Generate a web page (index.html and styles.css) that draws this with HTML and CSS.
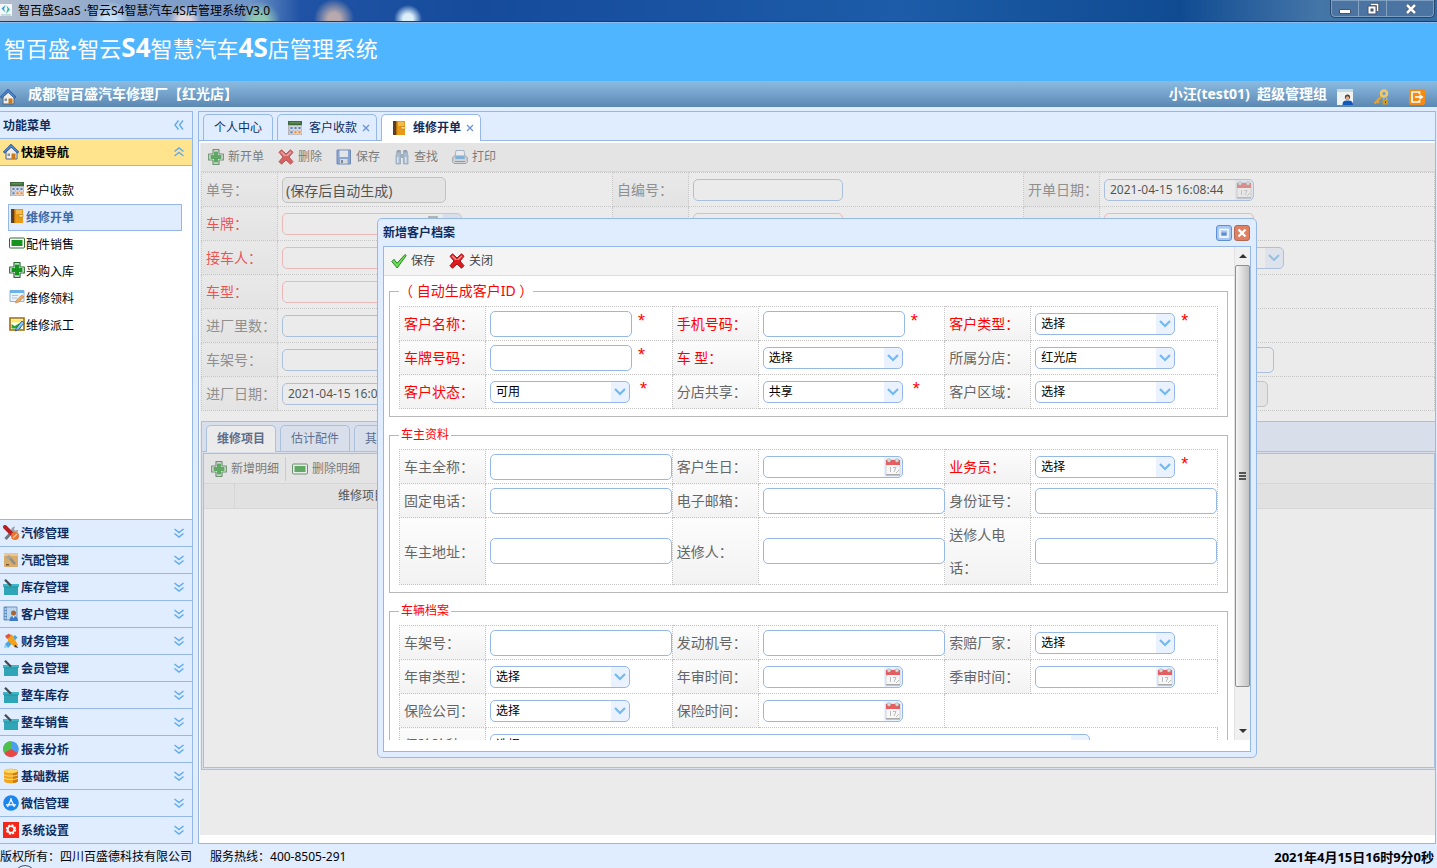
FILE: index.html
```html
<!DOCTYPE html>
<html lang="zh-CN">
<head>
<meta charset="utf-8">
<title>智百盛SaaS ·智云S4智慧汽车4S店管理系统V3.0</title>
<link rel="stylesheet" href="styles.css">
</head>
<body>
<svg class="sprite" aria-hidden="true">
  <symbol id="home" viewBox="0 0 16 16"><path d="M3 8v7h11V8L8.500 3z" fill="#f4efe2" stroke="#56627a"/><path d="M.8 8.800 8 1.500l7.400 7.300" fill="none" stroke="#2b5fa8" stroke-width="2.600"/><path d="M1.500 8 8 1.700 14.600 8" fill="none" stroke="#6ba6e8"/><path d="M8.500 9.500h4V15h-4z" fill="#c97a1e"/><path d="M4.500 9.500h2.500v2.500H4.500z" fill="#7d91ae"/></symbol>
  <symbol id="calc" viewBox="0 0 16 16"><path d="M1 1h14v14H1z" fill="#b5b5b5"/><path d="M1 1h14v4H1z" fill="#3f6b3c"/><path d="M2.500 2h11v1.500h-11z" fill="#5f8d58"/><path d="M3 6.500h3v3H3zM7 6.500h3v3H7zM3 10.800h3v3H3z" fill="#5f83b8" stroke="#fff" stroke-width=".6"/><path d="M11 6.500h3v3h-3z" fill="#5f83b8" stroke="#fff" stroke-width=".6"/><path d="M7 10.800h3v3H7zM11 10.800h3v3h-3z" fill="#e58a3c" stroke="#fff" stroke-width=".6"/></symbol>
  <symbol id="book" viewBox="0 0 16 16"><path d="M2 1h12v14H2z" fill="#e79a16"/><path d="M2 1h3v14H2z" fill="#5a4026"/><path d="M5 1h1.200v14H5z" fill="#b8720d"/><path d="M7 2h6v4H7z" fill="#f4bb4b"/><path d="M10 6.500h4v2.500h-4z" fill="#ffe089" stroke="#a86b10" stroke-width=".5"/></symbol>
  <symbol id="minus" viewBox="0 0 16 16"><rect x=".5" y="3" width="15" height="10" rx="1" fill="#fff" stroke="#2d6b35"/><path d="M2.500 5h11v6h-11z" fill="#16921e"/></symbol>
  <symbol id="plus" viewBox="0 0 16 16"><path d="M5 .7h6V5h4.300v6H11v4.300H5V11H.7V5H5z" fill="#fff" stroke="#2d6b35" stroke-width="1.200" stroke-linejoin="round"/><path d="M6 2.500h4V6h3.500v4H10v3.500H6V10H2.500V6H6z" fill="#16921e"/></symbol>
  <symbol id="formedit" viewBox="0 0 16 16"><path d="M1 1.500h14v11H1z" fill="#eaf3fb" stroke="#8fb3d3"/><path d="M1 1h14v3H1z" fill="#6fb2e8"/><path d="M3 6.500h6M3 9h5" stroke="#a9c4dc"/><path d="m6.500 14 1-3 5.500-5 2 2-5.500 5.200z" fill="#eda963" stroke="#b88450" stroke-width=".6"/></symbol>
  <symbol id="picedit" viewBox="0 0 16 16"><path d="M1 2h14v12H1z" fill="#fff" stroke="#a56a00" stroke-width="1.600"/><path d="M2.500 3.500h11v3h-11z" fill="#ffe86a"/><path d="M2.500 8l3 2L12 6.500V12.500H2.500z" fill="#2da52d"/><path d="m6.500 15 .8-3L13 5l2.300 2-5.800 6.600z" fill="#8cc8f5" stroke="#14499a" stroke-width=".8"/></symbol>
  <symbol id="tools" viewBox="0 0 16 16"><path d="m2.500 14 6.500-7" stroke="#6e767c" stroke-width="3"/><path d="M9 8a4 4 0 0 1 1-6l2-.6-1 3 1.300 1.300 2.900-.9c0 3-3 5-6.200 3.200" fill="#9aa1a6"/><path d="m2 2 6.500 6.500" stroke="#b51f24" stroke-width="4" stroke-linecap="round"/><circle cx="12" cy="11" r="4" fill="#e8742c"/><path d="m10 13 4-4" stroke="#f7c79f" stroke-width="1.200"/></symbol>
  <symbol id="parts" viewBox="0 0 16 16"><rect x="1" y="1" width="14" height="14" rx="1" fill="#d7ab6a"/><path d="M1 1h14v3H1z" fill="#e8c890"/><path d="m5 4 7 8" stroke="#8c8b86" stroke-width="2.500"/><path d="M3 4.500 6 3l2 3-2 2-2-1z" fill="#a9a49b"/><path d="M3 12h3v1.500H3z" fill="#7b5934"/></symbol>
  <symbol id="basket" viewBox="0 0 16 16"><path d="M0 5h16v3H0z" fill="#3fb7c8"/><path d="M1 7.500h14V16H1z" fill="#2fa5b7"/><path d="m2 .8 6 6" stroke="#414b50" stroke-width="2.300"/><path d="M1 8h14" stroke="#1f8494" stroke-width=".6"/></symbol>
  <symbol id="client" viewBox="0 0 16 16"><path d="M1 1h13v13H1z" fill="#bcd6ef" stroke="#6f94bd"/><path d="M1 1h3v13H1z" fill="#5c8fc4"/><path d="M1.500 3h2M1.500 6h2M1.500 9h2M1.500 12h2" stroke="#fff"/><circle cx="10.500" cy="7" r="2.500" fill="#a8652f"/><path d="M6.500 15c0-4 2-5 4-5s4.500 1 4.500 5z" fill="#3b7bc9"/><path d="m9.500 10 1 2.500 1-2.500z" fill="#fff"/></symbol>
  <symbol id="brush" viewBox="0 0 16 16"><path d="m2 11 10-9 2.500 2.500L5 15z" fill="#48a6e0"/><path d="m4 2 5-.5L15 12l-3 2.500L5 8z" fill="#f2a21d"/><path d="m2 3 4-2.500L8 3 4 6z" fill="#e55246"/><path d="m12 11.500 3.500 3.500-4-1z" fill="#333"/><path d="m2 11 3 3-4 1z" fill="#8bcaf0"/></symbol>
  <symbol id="pie" viewBox="0 0 16 16"><circle cx="8" cy="8" r="7.800" fill="#4b9ded"/><path d="M8 8V.2A7.800 7.800 0 0 0 1.200 12z" fill="#4cc047"/><path d="M8 8 1.200 12A7.800 7.800 0 0 0 14.800 12z" fill="#e94742"/></symbol>
  <symbol id="db" viewBox="0 0 16 16"><path d="M1 3c0-3 14-3 14 0v10c0 3-14 3-14 0z" fill="#f0a51c"/><path d="M10 1.200c3 .2 5 1 5 1.800v10c0 1-2 1.800-5 2z" fill="#cf7c0d"/><ellipse cx="8" cy="3" rx="7" ry="2" fill="#ffd765"/><path d="M1 6.500c1 2 13 2 14 0M1 10c1 2 13 2 14 0" fill="none" stroke="#ffe08a"/></symbol>
  <symbol id="app" viewBox="0 0 16 16"><circle cx="8" cy="8" r="7.800" fill="#1b86ee"/><path d="m4.500 12 4-8.500M7.500 3.500l4 8.500M3 9.800h10" fill="none" stroke="#fff" stroke-width="1.300"/></symbol>
  <symbol id="gear" viewBox="0 0 16 16"><path d="M0 0h16v16H0z" fill="#f52718"/><circle cx="8" cy="7.500" r="4.300" fill="none" stroke="#fff" stroke-width="1.800" stroke-dasharray="2 1.370"/><circle cx="8" cy="7.500" r="3.200" fill="none" stroke="#fff" stroke-width="1.600"/></symbol>
  <symbol id="cross" viewBox="0 0 16 16"><path d="M1 3.300 3.500.8 8 5 12.500.8 15 3.300 11 8l4 4.700-2.500 2.500L8 11l-4.500 4.200L1 12.700 5 8z" fill="#dc1c1c" stroke="#a80f16"/><path d="M2.500 3.300 3.500 2.300 8 6.500l4.500-4.200 1 1L10 7H6z" fill="#f58a8a"/></symbol>
  <symbol id="check" viewBox="0 0 16 16"><path d="M.8 8.500 3 6.300l3 4L14 1.500l1.200 1-9 12.500z" fill="#6fdc55" stroke="#238a1e" stroke-linejoin="round"/></symbol>
  <symbol id="disk" viewBox="0 0 16 16"><path d="M1 1h13.500v14H1z" fill="#5a8ad6" stroke="#365fa6"/><path d="M3.500 1.500h8.500v6.500h-8.500z" fill="#eef4fc"/><path d="M4 10h7.500v4.500H4z" fill="#dfe6ee"/><path d="M5 11h2v3H5z" fill="#4a5d7c"/></symbol>
  <symbol id="find" viewBox="0 0 16 16"><path d="M3 2h3.500v13H2V7zM9.500 2H13l1 5v8H9.500z" fill="#8fb0d0" stroke="#7590ab" stroke-width=".8"/><path d="M6.500 5h3v4h-3z" fill="#7e9cb8"/><path d="M3 8h1.500v6H3zM11 8h1.500v6H11z" fill="#e8f2fb"/><path d="M3 1h3.500v2.500H3zM9.500 1H13v2.500H9.500z" fill="#73869a"/></symbol>
  <symbol id="print" viewBox="0 0 16 16"><path d="M4 1.500h8l1 6H3z" fill="#fff" stroke="#8aa4c0"/><path d="M.7 8.500 3 7h10l2.300 1.500V13L14 14.500H2L.7 13z" fill="#d2d6dc" stroke="#7c858f"/><path d="M4 7h8l1 3H3z" fill="#4f9de0"/><path d="M3 12.500h10" stroke="#777"/></symbol>
  <symbol id="usercard" viewBox="0 0 16 16"><path d="M0 0h16v16H0z" fill="#eef3f3"/><path d="M0 0h16v3H0z" fill="#cad9dc"/><circle cx="10.500" cy="8" r="2.600" fill="#5a3c2a"/><circle cx="10.500" cy="9" r="1.800" fill="#e5b089"/><path d="M5.500 16c0-4 2-4.500 5-4.500s5.500.5 5.500 4.500z" fill="#1559b8"/></symbol>
  <symbol id="key" viewBox="0 0 16 16"><path d="m9 7-7.500 7.500M4 12l2 2" stroke="#e0a43d" stroke-width="2.400"/><circle cx="11" cy="4.500" r="3" fill="none" stroke="#f4c866" stroke-width="2.600"/><path d="M9.500 11h5.500v4.500H9.500z" fill="#d39a1e"/><path d="M10.800 11V9.500c0-2 3-2 3 0V11" fill="none" stroke="#b9bec4"/><path d="M12 12.500h1v1.500h-1z" fill="#63430b"/></symbol>
  <symbol id="exit" viewBox="0 0 16 16"><rect width="16" height="16" rx="2" fill="#f58b12"/><path d="M10.500 5V3H3v10h7.500v-2" fill="none" stroke="#fff" stroke-width="1.700"/><path d="M6 8h6" stroke="#fff" stroke-width="1.700"/><path d="m10.500 5 4 3-4 3z" fill="#fff"/></symbol>
  <symbol id="down2" viewBox="0 0 10 10"><path d="m.5 1 4.500 3.500L9.500 1M.5 5.500 5 9l4.500-3.500" fill="none" stroke="#5fabec" stroke-width="1.400"/></symbol>
  <symbol id="up2" viewBox="0 0 10 10"><path d="M.5 4.500 5 1l4.500 3.500M.5 9 5 5.500 9.500 9" fill="none" stroke="#5fabec" stroke-width="1.400"/></symbol>
  <symbol id="left2" viewBox="0 0 10 10"><path d="M4.500.5 1 5l3.500 4.500M9 .5 5.500 5 9 9.500" fill="none" stroke="#5fabec" stroke-width="1.400"/></symbol>
  <symbol id="tabx" viewBox="0 0 8 8"><path d="m1 1 6 6M7 1 1 7" stroke="#6b93cb" stroke-width="1.300"/></symbol>
  <symbol id="winmax" viewBox="0 0 16 16"><rect x=".5" y=".5" width="15" height="15" rx="2.500" fill="#a9c9f3" stroke="#5f8fd0"/><path d="M4 4.500h8v7.500H4z" fill="#a9c9f3" stroke="#fff" stroke-width="1.400"/><path d="M5.500 7.500h5v3h-5z" fill="#5f8fd0"/></symbol>
  <symbol id="winclose" viewBox="0 0 16 16"><rect x=".5" y=".5" width="15" height="15" rx="2.500" fill="#e07f62" stroke="#ae6a55"/><path d="m4.500 4.500 7 7M11.500 4.500l-7 7" stroke="#fff" stroke-width="2.400"/></symbol>
  <symbol id="logo" viewBox="0 0 12 12"><path d="M0 0h12v12H0z" fill="#f4f8f8"/><path d="M5.500 1 1.500 4.500l4 4L4 5z" fill="#2f9ed0"/><path d="m6.500 1.500 3.500 4L6 10l1.500-5z" fill="#45b7a0"/><path d="M1 11h10" stroke="#9bb"/></symbol>
  <symbol id="wmin" viewBox="0 0 14 14"><path d="M1.500 7.500h11v4h-11z" fill="#fff" stroke="#47536b"/></symbol>
  <symbol id="wrestore" viewBox="0 0 14 14"><path d="M5 2.500h6.500V9" fill="none" stroke="#47536b" stroke-width="3.500"/><path d="M5 2.500h6.500V9" fill="none" stroke="#fff" stroke-width="1.600"/><path d="M3.500 5.500h5v5h-5z" fill="none" stroke="#47536b" stroke-width="4"/><path d="M3.500 5.500h5v5h-5z" fill="none" stroke="#fff" stroke-width="2"/></symbol>
  <symbol id="wclose" viewBox="0 0 14 14"><path d="m3 3 8 8M11 3l-8 8" stroke="#47536b" stroke-width="4.200"/><path d="m3 3 8 8M11 3l-8 8" stroke="#fff" stroke-width="2.500"/></symbol>
</svg>

<div class="titlebar">
  <svg class="logo"><use href="#logo"/></svg>
  <span class="apptitle">智百盛SaaS ·智云S4智慧汽车4S店管理系统V3.0</span>
  <div class="winbtns">
    <button aria-label="最小化"><svg><use href="#wmin"/></svg></button>
    <button aria-label="还原"><svg><use href="#wrestore"/></svg></button>
    <button class="wide" aria-label="关闭窗口"><svg><use href="#wclose"/></svg></button>
  </div>
</div>

<header class="banner"><h1>智百盛<b>·</b>智云<b>S4</b>智慧汽车<b>4S</b>店管理系统</h1></header>
<div class="shopbar">
  <svg class="ic"><use href="#home"/></svg>
  <span class="shop">成都智百盛汽车修理厂【红光店】</span>
  <span class="who">小汪(test01)&nbsp; 超级管理组</span>
  <a href="#" aria-label="个人资料"><svg class="ic"><use href="#usercard"/></svg></a>
  <a href="#" aria-label="修改密码"><svg class="ic"><use href="#key"/></svg></a>
  <a href="#" aria-label="退出"><svg class="ic"><use href="#exit"/></svg></a>
</div>

<div class="work">
  <nav class="west">
    <div class="acc top">功能菜单<svg class="chev"><use href="#left2"/></svg></div>
    <button class="acc open"><svg class="ic"><use href="#home"/></svg>快捷导航<svg class="chev"><use href="#up2"/></svg></button>
    <div class="tree">
      <a href="#"><svg class="ic"><use href="#calc"/></svg>客户收款</a>
      <a href="#" class="sel"><svg class="ic"><use href="#book"/></svg>维修开单</a>
      <a href="#"><svg class="ic"><use href="#minus"/></svg>配件销售</a>
      <a href="#"><svg class="ic"><use href="#plus"/></svg>采购入库</a>
      <a href="#"><svg class="ic"><use href="#formedit"/></svg>维修领料</a>
      <a href="#"><svg class="ic"><use href="#picedit"/></svg>维修派工</a>
    </div>
    <button class="acc"><svg class="ic"><use href="#tools"/></svg>汽修管理<svg class="chev"><use href="#down2"/></svg></button>
    <button class="acc"><svg class="ic"><use href="#parts"/></svg>汽配管理<svg class="chev"><use href="#down2"/></svg></button>
    <button class="acc"><svg class="ic"><use href="#basket"/></svg>库存管理<svg class="chev"><use href="#down2"/></svg></button>
    <button class="acc"><svg class="ic"><use href="#client"/></svg>客户管理<svg class="chev"><use href="#down2"/></svg></button>
    <button class="acc"><svg class="ic"><use href="#brush"/></svg>财务管理<svg class="chev"><use href="#down2"/></svg></button>
    <button class="acc"><svg class="ic"><use href="#basket"/></svg>会员管理<svg class="chev"><use href="#down2"/></svg></button>
    <button class="acc"><svg class="ic"><use href="#basket"/></svg>整车库存<svg class="chev"><use href="#down2"/></svg></button>
    <button class="acc"><svg class="ic"><use href="#basket"/></svg>整车销售<svg class="chev"><use href="#down2"/></svg></button>
    <button class="acc"><svg class="ic"><use href="#pie"/></svg>报表分析<svg class="chev"><use href="#down2"/></svg></button>
    <button class="acc"><svg class="ic"><use href="#db"/></svg>基础数据<svg class="chev"><use href="#down2"/></svg></button>
    <button class="acc"><svg class="ic"><use href="#app"/></svg>微信管理<svg class="chev"><use href="#down2"/></svg></button>
    <button class="acc"><svg class="ic"><use href="#gear"/></svg>系统设置<svg class="chev"><use href="#down2"/></svg></button>
  </nav>

  <main class="center">
    <div class="tabs">
      <button class="tab">个人中心</button>
      <button class="tab icon"><svg class="ic"><use href="#calc"/></svg>客户收款<svg class="tabx"><use href="#tabx"/></svg></button>
      <button class="tab icon on"><svg class="ic"><use href="#book"/></svg>维修开单<svg class="tabx"><use href="#tabx"/></svg></button>
    </div>
    <div class="page">
      <div class="toolbar">
        <button><svg class="ic"><use href="#plus"/></svg>新开单</button>
        <button><svg class="ic"><use href="#cross"/></svg>删除</button>
        <button><svg class="ic"><use href="#disk"/></svg>保存</button>
        <button><svg class="ic"><use href="#find"/></svg>查找</button>
        <button><svg class="ic"><use href="#print"/></svg>打印</button>
      </div>
      <table class="form order">
        <colgroup><col class="lab"><col><col class="lab"><col><col class="lab"><col></colgroup>
        <tr><th><label for="o1">单号：</label></th><td><input id="o1" class="tall ro" value="(保存后自动生成)" readonly></td><th><label for="o2">自编号：</label></th><td><input id="o2" class="w150"></td><th><label for="o3">开单日期：</label></th><td><input id="o3" class="w150 date" value="2021-04-15 16:08:44"></td></tr>
        <tr><th class="req"><label for="o4">车牌：</label></th><td><input id="o4" class="w180 bad lookup"></td><th></th><td><input class="w150 bad" aria-label="联系人"></td><th></th><td><input class="w150 bad" aria-label="联系电话"></td></tr>
        <tr><th class="req"><label for="o5">接车人：</label></th><td><input id="o5" class="w180 bad"></td><th></th><td></td><th></th><td><select class="w180" aria-label="维修类型"><option></option></select></td></tr>
        <tr><th class="req"><label for="o6">车型：</label></th><td><input id="o6" class="w180 bad"></td><th></th><td></td><th></th><td></td></tr>
        <tr><th><label for="o7">进厂里数：</label></th><td><input id="o7" class="w150"></td><th></th><td></td><th></th><td></td></tr>
        <tr><th><label for="o8">车架号：</label></th><td><input id="o8" class="w150"></td><th></th><td></td><th></th><td><input class="w170 tall" aria-label="备注"></td></tr>
        <tr><th><label for="o9">进厂日期：</label></th><td><input id="o9" class="w150 date" value="2021-04-15 16:08:44"></td><th></th><td></td><th></th><td><input class="tall ro" aria-label="状态" readonly></td></tr>
      </table>
      <section class="detail">
        <div class="tabs sub">
          <button class="tab on">维修项目</button>
          <button class="tab">估计配件</button>
          <button class="tab">其它</button>
        </div>
        <div class="grid">
          <div class="toolbar">
            <button><svg class="ic"><use href="#plus"/></svg>新增明细</button>
            <i class="sep"></i>
            <button><svg class="ic"><use href="#minus"/></svg>删除明细</button>
          </div>
          <div class="gridhead"><span class="num"></span><span class="colname">维修项目</span></div>
        </div>
      </section>
      <div class="mask"></div>
    </div>

    <section class="dialog" role="dialog" aria-labelledby="dlgtitle">
      <header class="dlghead"><h2 id="dlgtitle">新增客户档案</h2><button aria-label="最大化"><svg class="ic"><use href="#winmax"/></svg></button><button aria-label="关闭对话框"><svg class="ic"><use href="#winclose"/></svg></button></header>
      <div class="dlgbody">
        <div class="scroll">
          <div class="content">
            <div class="toolbar">
              <button><svg class="ic"><use href="#check"/></svg>保存</button>
              <button><svg class="ic"><use href="#cross"/></svg>关闭</button>
            </div>
            <fieldset>
              <legend class="big">（ 自动生成客户ID ）</legend>
              <table class="form">
                <colgroup><col class="lab"><col><col class="lab"><col><col class="lab"><col></colgroup>
                <tr><th class="req"><label for="c1">客户名称：</label></th><td><input id="c1" class="w142 tall"><em>*</em></td><th class="req"><label for="c2">手机号码：</label></th><td><input id="c2" class="w142 tall"><em>*</em></td><th class="req"><label for="c3">客户类型：</label></th><td><select id="c3"><option>选择</option></select><em>*</em></td></tr>
                <tr><th class="req"><label for="c4">车牌号码：</label></th><td><input id="c4" class="w142 tall"><em>*</em></td><th class="req"><label for="c5">车 型：</label></th><td><select id="c5"><option>选择</option></select></td><th><label for="c6">所属分店：</label></th><td><select id="c6"><option>红光店</option></select></td></tr>
                <tr><th class="req"><label for="c7">客户状态：</label></th><td><select id="c7"><option>可用</option></select><em class="far">*</em></td><th><label for="c8">分店共享：</label></th><td><select id="c8"><option>共享</option></select><em class="far">*</em></td><th><label for="c9">客户区域：</label></th><td><select id="c9"><option>选择</option></select></td></tr>
              </table>
            </fieldset>
            <fieldset>
              <legend>车主资料</legend>
              <table class="form">
                <colgroup><col class="lab"><col><col class="lab"><col><col class="lab"><col></colgroup>
                <tr><th><label for="d1">车主全称：</label></th><td><input id="d1" class="w182 tall"></td><th><label for="d2">客户生日：</label></th><td><input id="d2" class="date"></td><th class="req"><label for="d3">业务员：</label></th><td><select id="d3"><option>选择</option></select><em>*</em></td></tr>
                <tr><th><label for="d4">固定电话：</label></th><td><input id="d4" class="w182 tall"></td><th><label for="d5">电子邮箱：</label></th><td><input id="d5" class="w182 tall"></td><th><label for="d6">身份证号：</label></th><td><input id="d6" class="w182 tall"></td></tr>
                <tr><th><label for="d7">车主地址：</label></th><td><input id="d7" class="w182 tall"></td><th><label for="d8">送修人：</label></th><td><input id="d8" class="w182 tall"></td><th><label for="d9">送修人电话：</label></th><td><input id="d9" class="w182 tall"></td></tr>
              </table>
            </fieldset>
            <fieldset>
              <legend>车辆档案</legend>
              <table class="form">
                <colgroup><col class="lab"><col><col class="lab"><col><col class="lab"><col></colgroup>
                <tr><th><label for="e1">车架号：</label></th><td><input id="e1" class="w182 tall"></td><th><label for="e2">发动机号：</label></th><td><input id="e2" class="w182 tall"></td><th><label for="e3">索赔厂家：</label></th><td><select id="e3"><option>选择</option></select></td></tr>
                <tr><th><label for="e4">年审类型：</label></th><td><select id="e4"><option>选择</option></select></td><th><label for="e5">年审时间：</label></th><td><input id="e5" class="date"></td><th><label for="e6">季审时间：</label></th><td><input id="e6" class="date"></td></tr>
                <tr><th><label for="e7">保险公司：</label></th><td><select id="e7"><option>选择</option></select></td><th><label for="e8">保险时间：</label></th><td><input id="e8" class="date"></td><td colspan="2" class="blank"></td></tr>
                <tr><th><label for="e9">保险险种：</label></th><td colspan="5"><select id="e9" class="w600"><option>选择</option></select></td></tr>
              </table>
            </fieldset>
          </div>
          <div class="sbar" aria-hidden="true"><i class="up"></i><div class="thumb"><i></i></div><i class="down"></i></div>
        </div>
      </div>
    </section>
  </main>
</div>

<footer class="foot"><span class="copy">版权所有：四川百盛德科技有限公司</span><span>服务热线：400-8505-291</span><b>2021年4月15日16时9分0秒</b></footer>
</body>
</html>
```
FILE: styles.css
```css
* { box-sizing: border-box; }
body {
  margin: 0;
  height: 100vh;
  display: flex;
  flex-direction: column;
  background: #e0ecff;
  font: 12px/16px "Noto Sans", "Noto Sans CJK SC", sans-serif;
  color: #000;
  overflow: hidden;
}
button, input, select { font: inherit; color: inherit; margin: 0; }
button { border: 0; padding: 0; background: none; display: flex; align-items: center; white-space: nowrap; }
a { color: inherit; text-decoration: none; }
h1, h2 { margin: 0; }
svg { display: block; flex: none; }
.sprite { position: absolute; width: 0; height: 0; }
.ic { width: 16px; height: 16px; }

/* window title */
.titlebar {
  flex: none;
  height: 23px;
  display: flex;
  align-items: flex-start;
  border-bottom: 1px solid #8cbcf0;
  box-shadow: inset 0 -1px #173b6c;
  background:
    radial-gradient(circle at 334px 19px, #b9a9ad 0 6px, transparent 20px),
    radial-gradient(circle at 408px 19px, #dcf0fa 0 5px, transparent 14px),
    radial-gradient(circle at 260px 21px, #8fc7b4 0 6px, transparent 20px),
    radial-gradient(circle at 110px 21px, #c5e2f8 0 6px, transparent 20px),
    radial-gradient(circle at 185px 21px, #e2d8e0 0 6px, transparent 16px),
    linear-gradient(90deg, #b3bfcf 0, #8aa5cb 120px, #6f94c8 250px, #2053a5 300px, #164b9b 480px, #1c5ca8 900px, #104b92 1180px, #4576a8 1320px, #356ca4 100%);
}
.logo { width: 12px; height: 14px; margin-top: 3px; }
.apptitle { margin: 3px 0 0 6px; flex: 1; white-space: nowrap; }
.winbtns { display: flex; margin-right: 2px; border: 1px solid #26486e; border-top: 0; border-radius: 0 0 5px 5px; box-shadow: inset 0 0 0 1px #7d9fc2; background: #4b74a2; }
.winbtns button { width: 28px; height: 17px; justify-content: center; border-right: 1px solid #86a4c2; }
.winbtns .wide { width: 47px; border: 0; }
.winbtns svg { width: 14px; height: 14px; }

.banner { flex: none; height: 58px; background: #4fb5ff; padding: 9px 4px; }
.banner h1 { font-size: 22px; line-height: 32px; font-weight: 400; color: #fff; }
.banner b { font-size: 26px; line-height: 26px; }
.shopbar {
  flex: none;
  height: 26px;
  display: flex;
  align-items: center;
  padding-right: 12px;
  background: linear-gradient(#8cbbe2, #5a88b2);
  color: #fff;
  font-size: 14px;
  font-weight: bold;
}
.shopbar .ic { margin-top: 6px; }
.shop { margin-left: 12px; flex: 1; }
.who { margin-right: 10px; }
.shopbar a + a { margin-left: 20px; }

.work { flex: 1; min-height: 0; display: flex; gap: 5px; padding: 4px 1px 0 0; }

/* accordion menu */
.west { width: 193px; flex: none; display: flex; flex-direction: column; border: 1px solid #95b8e7; border-left: 0; background: #fff; }
.acc {
  flex: none;
  height: 27px;
  padding: 2px 8px 0 3px;
  display: flex;
  align-items: center;
  gap: 2px;
  background: #e0ecff;
  border-top: 1px solid #95b8e7;
  color: #0e2d5f;
  font-weight: bold;
}
.acc .ic { margin-bottom: 2px; }
.acc.top { height: 26px; border-top: 0; }
.acc.open { height: 28px; background: #ffe48d; border-bottom: 1px solid #95b8e7; color: #000; }
.chev { width: 10px; height: 10px; margin: 0 0 2px auto; }
.tree { flex: 1; padding: 11px 10px 0 8px; }
.tree a { display: flex; align-items: center; height: 27px; gap: 1px; border: 1px solid transparent; }
.tree .ic { margin-bottom: 3px; }
.tree .sel { background: #e0ecff; border-color: #95b8e7; color: #416aa3; font-weight: bold; }

/* tabs */
.center { flex: 1; min-width: 0; display: flex; flex-direction: column; border: 1px solid #95b8e7; position: relative; background: #fff; }
.tabs { flex: none; display: flex; align-items: flex-end; gap: 4px; height: 29px; padding-left: 4px; border-bottom: 1px solid #95b8e7; background: #e0ecff; }
.tab { height: 26px; padding: 0 10px; background: #e0ecff; border: 1px solid #95b8e7; border-bottom: 0; border-radius: 5px 5px 0 0; color: #0e2d5f; }
.tab.on { height: 27px; margin-bottom: -1px; background: #fff; font-weight: bold; }
.tab.icon { gap: 5px; padding: 0 6px 0 9px; }
.tab .ic { margin-right: 1px; }
.tabx { width: 8px; height: 8px; }

.page { flex: 1; position: relative; padding: 2px 0 9px 2px; display: flex; flex-direction: column; }
.mask { position: absolute; inset: 2px 0 8px 1px; background: #ccc; opacity: .4; }
.toolbar { flex: none; height: 29px; display: flex; align-items: center; gap: 14px; padding-left: 7px; background: #f4f4f4; border-bottom: 1px solid #ddd; color: #444; }
.toolbar button { gap: 4px; }
.sep { width: 1px; height: 24px; background: #ccc; }

/* form tables */
.form { width: 100%; border-collapse: collapse; table-layout: fixed; }
.form .lab { width: 86px; }
.form.order .lab { width: 76px; }
.form th, .form td { border: 1px dotted #c4c4c4; height: 34px; padding: 0 0 0 4px; }
.form th { background: linear-gradient(#fcfcfc, #f2f2f2); color: #666; font-size: 14px; line-height: 33px; font-weight: 400; text-align: left; }
.form .req { color: #f00; }
.form td { line-height: 0; white-space: nowrap; }
.form .blank { border-right: 0; }
.form input, .form select {
  width: 140px;
  height: 22px;
  border: 1px solid #95b8e7;
  border-radius: 5px;
  padding: 0 5px;
  background: #fff;
  line-height: 16px;
  vertical-align: middle;
  appearance: none;
}
.form select { background: #fff url("data:image/svg+xml,%3Csvg xmlns='http://www.w3.org/2000/svg' width='18' height='20'%3E%3Cpath d='M0 0h18v20H0z' fill='%23eaf2ff'/%3E%3Cpath d='m4 7 5 5 5-5' fill='none' stroke='%2373b9f0' stroke-width='2.200'/%3E%3C/svg%3E") right center no-repeat; }
.form .date { background: #fff url("data:image/svg+xml,%3Csvg xmlns='http://www.w3.org/2000/svg' width='18' height='20'%3E%3Cpath d='M0 0h18v20H0z' fill='%23eaf2ff'/%3E%3Cpath d='M2 3h14v15H2z' fill='%23f8f8f8' stroke='%23bbb' stroke-width='.6'/%3E%3Cpath d='M2 3h14v5H2z' fill='%23e85e5e'/%3E%3Cpath d='M2 17h14v1.500H2z' fill='%23aaa'/%3E%3Ccircle cx='5' cy='3.500' r='1.800' fill='%23ddd' stroke='%23999' stroke-width='.5'/%3E%3Ccircle cx='13' cy='3.500' r='1.800' fill='%23ddd' stroke='%23999' stroke-width='.5'/%3E%3Cpath d='M6.500 10v5M9 10.500h3l-2 4.500M12 16l3-3' fill='none' stroke='%23bbb'/%3E%3C/svg%3E") right center no-repeat; }
.form .lookup { background: #fff url("data:image/svg+xml,%3Csvg xmlns='http://www.w3.org/2000/svg' width='38' height='20'%3E%3Cpath d='M20 0h18v20H20z' fill='%23e0ecff'/%3E%3Cpath d='M6 3h8v14H6z' fill='%23f4f8f4' stroke='%23789078' stroke-width='1.500'/%3E%3C/svg%3E") right center no-repeat; }
.form .tall { height: 26px; }
.form .w142 { width: 142px; }
.form .w150 { width: 150px; }
.form .w170 { width: 170px; }
.form .w180 { width: 180px; }
.form .w182 { width: 182px; }
.form .w600 { width: 600px; }
.form .ro { width: 164px; padding: 0 3px; font-size: 14px; background: #f3f3f3; border-color: #bbb; }
.form .bad { border-color: #ffa8a8; }
.form em { display: inline-block; padding-bottom: 6px; color: #f00; font: 18px/18px "Liberation Sans", sans-serif; margin-left: 6px; vertical-align: middle; }
.form .far { margin-left: 10px; }

/* detail grid */
.detail { flex: 1; display: flex; flex-direction: column; margin: 10px 0 64px; border: 1px solid #95b8e7; border-right: 0; background: #e0ecff; }
.tabs.sub { height: 30px; }
.grid { flex: 1; margin: 1px 0 1px 1px; border: 1px solid #95b8e7; background: #fff; }
.grid .toolbar { height: 30px; gap: 6px; }
.gridhead { display: flex; height: 25px; background: #efefef; border-bottom: 1px solid #ddd; }
.num { width: 31px; border-right: 1px dotted #ccc; }
.colname { width: 254px; text-align: center; line-height: 24px; }

/* dialog window */
.dialog { position: absolute; left: 178px; top: 106px; width: 880px; height: 540px; display: flex; flex-direction: column; padding: 5px; border: 1px solid #95b8e7; border-radius: 5px; background: #e0ecff; }
.dlghead { display: flex; align-items: center; gap: 2px; height: 22px; padding: 0 1px 4px 0; flex: none; }
.dlghead h2 { flex: 1; font-size: 12px; line-height: 16px; color: #0e2d5f; }
.dlgbody { flex: 1; min-height: 0; display: flex; padding-bottom: 11px; border: 1px solid #95b8e7; background: #fff; }
.scroll { flex: 1; display: flex; overflow: hidden; }
.content { flex: 1; min-width: 0; }
fieldset { margin: 0 6px 10px 5px; padding: 6px 9px 7px; border: 1px solid #b8b8b8; min-width: 0; }
.toolbar + fieldset { margin-top: 6px; }
legend { margin-left: 0; padding: 0 2px; color: #f00; line-height: 16px; }
.big { font-size: 14px; line-height: 18px; padding: 0; }

.sbar { width: 16px; display: flex; flex-direction: column; align-items: center; background: #f0f0f0; border-left: 1px solid #e3e3e3; }
.sbar .up, .sbar .down { height: 18px; display: flex; align-items: center; }
.sbar .up::before, .sbar .down::before { content: ""; border: 4px solid transparent; border-top-width: 0; border-bottom: 4px solid #333; }
.sbar .down { margin-top: auto; }
.sbar .down::before { border-top: 4px solid #333; border-bottom-width: 0; }
.thumb { width: 15px; height: 422px; display: flex; align-items: center; justify-content: center; border: 1px solid #8f8f8f; border-radius: 2px; background: linear-gradient(90deg, #f5f5f5, #dcdcdc 50%, #c2c2c2); }
.thumb i { width: 7px; height: 8px; background: repeating-linear-gradient(#555 0 2px, transparent 2px 3px); }

.foot { flex: none; height: 24px; display: flex; align-items: center; gap: 18px; padding: 1px 3px 0 0; white-space: nowrap; position: relative; overflow: hidden; }
.foot b { margin-left: auto; font-size: 13px; }
.foot::after { content: ""; position: absolute; left: 14px; top: 21px; width: 20px; height: 20px; border: 1px solid #2f5680; border-radius: 50%; }
```
